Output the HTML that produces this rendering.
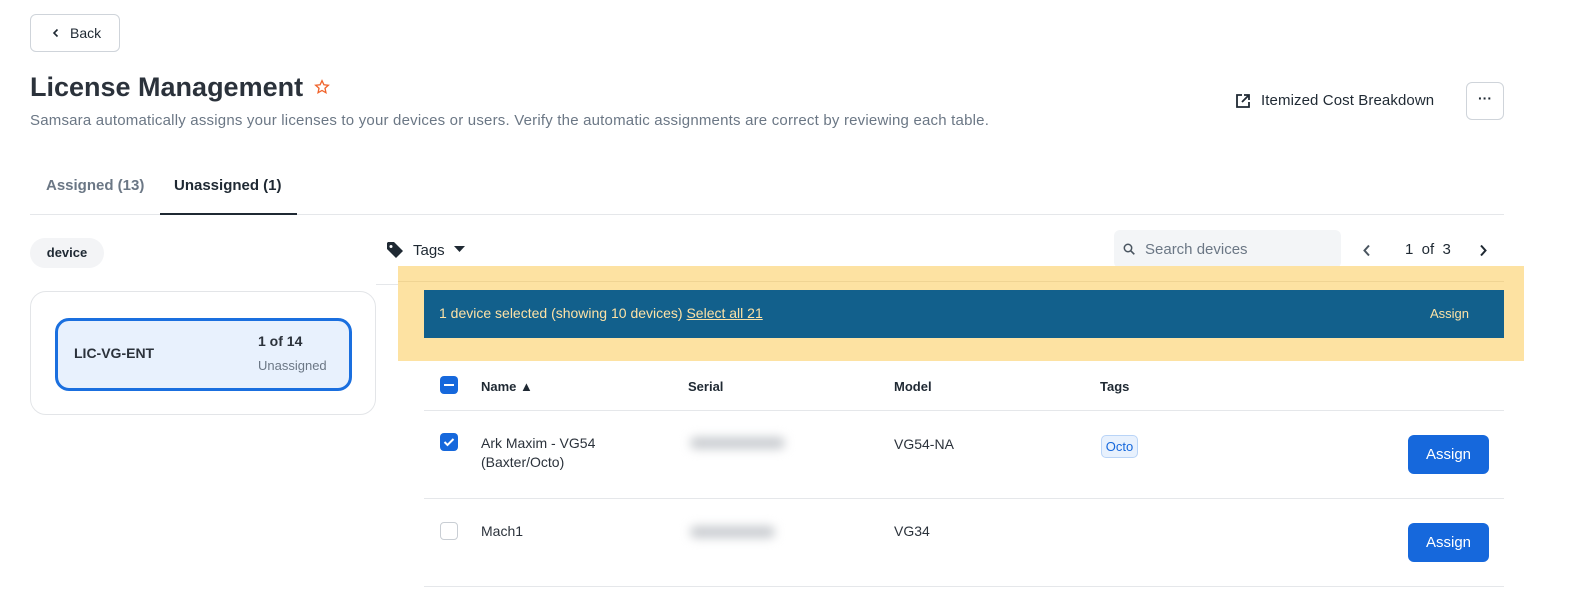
<!DOCTYPE html>
<html><head><meta charset="utf-8"><style>
*{box-sizing:border-box;margin:0;padding:0}
body{width:1583px;height:593px;background:#fff;font-family:"Liberation Sans",sans-serif;color:#1f2933;position:relative;overflow:hidden}
.a{position:absolute}
.cb{position:absolute;width:18px;height:18px;border-radius:4px}
.btn{position:absolute;background:#1668dc;color:#fff;border-radius:6px;font-size:15px;display:flex;align-items:center;justify-content:center;width:81px;height:39px}
.hd{font-weight:bold;font-size:13px;color:#1f2933}
.blur{position:absolute;height:12px;background:#c9ccd0;filter:blur(5px);border-radius:6px}
</style></head><body>
<div class="a" style="left:30px;top:14px;width:90px;height:38px;border:1px solid #cfd4da;border-radius:6px;font-size:14px;display:flex;align-items:center;padding-left:20px">
<svg width="10" height="10" viewBox="0 0 10 10"><path d="M6.5 1.5L3 5l3.5 3.5" fill="none" stroke="#1f2933" stroke-width="1.6"/></svg><span style="margin-left:9px">Back</span></div>
<div class="a" style="left:30px;top:72px;font-size:27px;font-weight:bold;color:#2b323b">License Management</div>
<svg class="a" style="left:314px;top:79px" width="16" height="16" viewBox="0 0 24 24"><path d="M12 2.5l2.9 6.2 6.6.7-5 4.5 1.4 6.6L12 17.2 6.1 20.5l1.4-6.6-5-4.5 6.6-.7z" fill="none" stroke="#f0642c" stroke-width="2"/></svg>
<div class="a" style="left:30px;top:112px;font-size:15px;color:#6b7785;letter-spacing:0.2px">Samsara automatically assigns your licenses to your devices or users. Verify the automatic assignments are correct by reviewing each table.</div>
<svg class="a" style="left:1235px;top:93px" width="16" height="16" viewBox="0 0 16 16"><path d="M7 2H2v12h12V9M9 2h5v5M14 2L7 9" fill="none" stroke="#1f2933" stroke-width="1.8"/></svg>
<div class="a" style="left:1261px;top:92px;font-size:15px;letter-spacing:0.1px">Itemized Cost Breakdown</div>
<div class="a" style="left:1466px;top:82px;width:38px;height:38px;border:1px solid #cfd4da;border-radius:6px;text-align:center;font-weight:bold;font-size:14px;line-height:30px">···</div>
<div class="a" style="left:46px;top:177px;font-size:15px;font-weight:bold;color:#6b7785">Assigned (13)</div>
<div class="a" style="left:174px;top:177px;font-size:15px;font-weight:bold;color:#1f2933">Unassigned (1)</div>
<div class="a" style="left:30px;top:214px;width:1474px;height:1px;background:#e5e7ea"></div>
<div class="a" style="left:160px;top:213px;width:137px;height:2px;background:#1f2933"></div>
<div class="a" style="left:30px;top:238px;width:74px;height:30px;border-radius:15px;background:#f3f4f6;font-size:13px;font-weight:bold;text-align:center;line-height:30px">device</div>
<div class="a" style="left:30px;top:291px;width:346px;height:124px;border:1px solid #e3e5e8;border-radius:16px"></div>
<div class="a" style="left:55px;top:318px;width:297px;height:73px;border:3px solid #1a6fdf;border-radius:14px;background:#e8f1fd"></div>
<div class="a" style="left:74px;top:345px;font-size:14px;font-weight:bold;color:#2b323b">LIC-VG-ENT</div>
<div class="a" style="left:258px;top:333px;font-size:14px;font-weight:bold;color:#2b323b">1 of 14</div>
<div class="a" style="left:258px;top:358px;font-size:13px;color:#6b7785">Unassigned</div>
<svg class="a" style="left:386px;top:241px" width="18" height="18" viewBox="0 0 18 18"><path d="M1 2v6l9 9 7-7-9-9H2z" fill="#1f2933"/><circle cx="5" cy="5.5" r="1.5" fill="#fff"/></svg>
<div class="a" style="left:413px;top:242px;font-size:15px">Tags</div>
<svg class="a" style="left:454px;top:246px" width="11" height="7"><path d="M0 0h11L5.5 6z" fill="#1f2933"/></svg>
<div class="a" style="left:1114px;top:230px;width:227px;height:38px;border-radius:6px;background:#f3f5f7"></div>
<svg class="a" style="left:1123px;top:243px" width="13" height="13" viewBox="0 0 13 13"><circle cx="5" cy="5" r="3.7" fill="none" stroke="#4a5560" stroke-width="1.5"/><path d="M7.8 7.8l3.5 3.5" stroke="#4a5560" stroke-width="1.6"/></svg>
<div class="a" style="left:1145px;top:241px;font-size:15px;color:#6b7785">Search devices</div>
<svg class="a" style="left:1362px;top:244px" width="10" height="13"><path d="M7 1.5L2.5 6.5 7 11.5" fill="none" stroke="#4a5560" stroke-width="2"/></svg>
<div class="a" style="left:1405px;top:241px;font-size:15px">1&nbsp; of&nbsp; 3</div>
<svg class="a" style="left:1478px;top:244px" width="10" height="13"><path d="M3 1.5L7.5 6.5 3 11.5" fill="none" stroke="#1f2933" stroke-width="2"/></svg>
<div class="a" style="left:376px;top:284px;width:1128px;height:1px;background:#e5e7ea"></div>
<div class="a" style="left:398px;top:266px;width:1126px;height:95px;background:#fde2a2"></div>
<div class="a" style="left:398px;top:281px;width:1106px;height:1px;background:#f0d493"></div>
<div class="a" style="left:424px;top:290px;width:1080px;height:48px;background:#12608c"></div>
<div class="a" style="left:439px;top:305px;font-size:14px;color:#fde2a6">1 device selected (showing 10 devices) <span style="text-decoration:underline">Select all 21</span></div>
<div class="a" style="left:1430px;top:306px;font-size:13px;color:#fde2a6">Assign</div>
<div class="cb" style="left:440px;top:376px;background:#1668dc"><div style="position:absolute;left:4px;top:8px;width:10px;height:2px;background:#fff"></div></div>
<div class="a hd" style="left:481px;top:379px">Name ▲</div>
<div class="a hd" style="left:688px;top:379px">Serial</div>
<div class="a hd" style="left:894px;top:379px">Model</div>
<div class="a hd" style="left:1100px;top:379px">Tags</div>
<div class="a" style="left:424px;top:410px;width:1080px;height:1px;background:#e5e7ea"></div>
<div class="cb" style="left:440px;top:433px;background:#1668dc"><svg width="18" height="18"><path d="M4.5 9l3 3 6-6" fill="none" stroke="#fff" stroke-width="2"/></svg></div>
<div class="a" style="left:481px;top:434px;font-size:14px;line-height:19px;color:#2b323b">Ark Maxim - VG54<br>(Baxter/Octo)</div>
<div class="blur" style="left:690px;top:437px;width:95px"></div>
<div class="a" style="left:894px;top:436px;font-size:14px;color:#2b323b">VG54-NA</div>
<div class="a" style="left:1101px;top:435px;width:37px;height:23px;border:1px solid #b9d4f7;background:#e8f1fd;border-radius:5px;font-size:13px;color:#1668dc;text-align:center;line-height:21px">Octo</div>
<div class="btn" style="left:1408px;top:435px">Assign</div>
<div class="a" style="left:424px;top:498px;width:1080px;height:1px;background:#e5e7ea"></div>
<div class="cb" style="left:440px;top:522px;border:1px solid #c9ced4"></div>
<div class="a" style="left:481px;top:523px;font-size:14px;color:#2b323b">Mach1</div>
<div class="blur" style="left:690px;top:526px;width:85px"></div>
<div class="a" style="left:894px;top:523px;font-size:14px;color:#2b323b">VG34</div>
<div class="btn" style="left:1408px;top:523px">Assign</div>
<div class="a" style="left:424px;top:586px;width:1080px;height:1px;background:#e5e7ea"></div>
</body></html>
